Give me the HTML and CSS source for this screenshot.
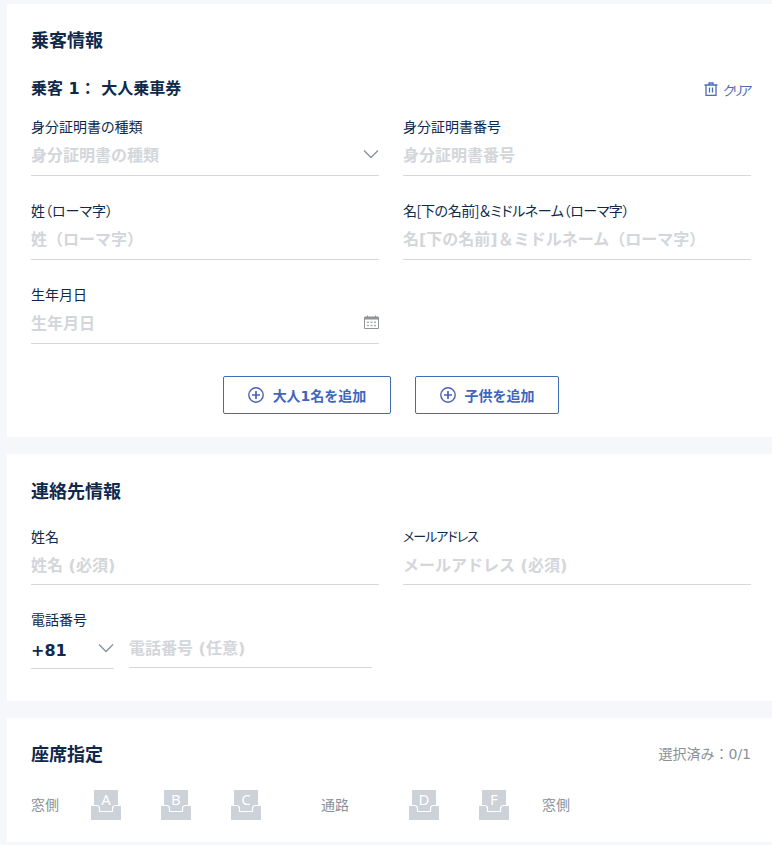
FILE: index.html
```html
<!DOCTYPE html>
<html lang="ja">
<head>
<meta charset="utf-8">
<title>乗客情報</title>
<link rel="stylesheet" href="styles.css">
</head>
<body>
<svg class="defs" width="0" height="0" aria-hidden="true">
  <symbol id="chev" viewBox="0 0 16 10"><path d="M1 1.5 8 8.5 15 1.5" fill="none" stroke="currentColor" stroke-width="1.3"/></symbol>
  <symbol id="plus" viewBox="0 0 16 16"><circle cx="8" cy="8" r="7.200" fill="none" stroke="currentColor" stroke-width="1.400"/><path d="M8 4v8M4 8h8" stroke="currentColor" stroke-width="1.700"/></symbol>
  <symbol id="seat" viewBox="0 0 30 30"><path d="M3 0H27V15H28Q30 15 30 17V30H0V17Q0 15 2 15H3Z" fill="#cdd1d8"/><path d="M1 15.500H5.500Q8.500 15.500 8.500 18.500V21.500H21.500V18.500Q21.500 15.500 24.500 15.500H29" fill="none" stroke="#fff" stroke-width="1.2"/></symbol>
</svg>
<main class="page">
  <section class="card card-pass">
    <h2 class="title">乗客情報</h2>
    <div class="pass-head">
      <h3 class="pass-title">乗客 1： 大人乗車券</h3>
      <a class="clear">
        <svg class="trash" viewBox="0 0 14 14"><path d="M.5 3h13M5 3V1h4v2M2 3v10.300h10V3M5.500 5.500v5M8.500 5.500v5" fill="none" stroke="currentColor" stroke-width="1.300"/></svg>
        <span class="clear-text">クリア</span>
      </a>
    </div>
    <div class="grid">
      <div class="field"><label>身分証明書の種類</label><div class="control"><span class="ph">身分証明書の種類</span><svg class="chev"><use href="#chev"/></svg></div></div>
      <div class="field"><label>身分証明書番号</label><div class="control"><span class="ph">身分証明書番号</span></div></div>
      <div class="field"><label>姓（ローマ字）</label><div class="control"><span class="ph">姓（ローマ字）</span></div></div>
      <div class="field"><label class="label-tight">名[下の名前]＆ミドルネーム（ローマ字）</label><div class="control"><span class="ph">名[下の名前]＆ミドルネーム（ローマ字）</span></div></div>
      <div class="field"><label>生年月日</label><div class="control"><span class="ph">生年月日</span>
        <svg class="cal" viewBox="0 0 15 14"><path d="M.5 2h14v11.500H.5Z" fill="none" stroke="#8f9499"/><path d="M.5 2h14v2.500H.5Z" fill="#8f9499"/><path d="M3.500 .5v2M11.500 .5v2" stroke="#8f9499"/><path d="M3 6.500h2v1.500H3ZM6.500 6.500h2v1.500h-2ZM10 6.500h2v1.500h-2ZM3 9.800h2v1.500H3ZM6.500 9.800h2v1.500h-2ZM10 9.800h2v1.500h-2Z" fill="#a9adb2"/></svg>
      </div></div>
    </div>
    <div class="actions">
      <button class="btn btn-adult"><svg class="plus"><use href="#plus"/></svg>大人1名を追加</button>
      <button class="btn btn-child"><svg class="plus"><use href="#plus"/></svg>子供を追加</button>
    </div>
  </section>

  <section class="card card-contact">
    <h2 class="title">連絡先情報</h2>
    <div class="grid">
      <div class="field"><label>姓名</label><div class="control"><span class="ph">姓名 (必須)</span></div></div>
      <div class="field"><label class="label-kana">メールアドレス</label><div class="control"><span class="ph">メールアドレス (必須)</span></div></div>
      <div class="field field-phone"><label>電話番号</label>
        <div class="phone">
          <div class="control country"><span class="code">+81</span><svg class="chev"><use href="#chev"/></svg></div>
          <div class="control tel"><span class="ph">電話番号 (任意)</span></div>
        </div>
      </div>
    </div>
  </section>

  <section class="card card-seat">
    <div class="seat-head">
      <h2 class="title">座席指定</h2>
      <span class="count">選択済み：0/1</span>
    </div>
    <div class="seats">
      <span class="side">窓側</span>
      <div class="seat"><svg><use href="#seat"/></svg><b>A</b></div>
      <div class="seat"><svg><use href="#seat"/></svg><b>B</b></div>
      <div class="seat"><svg><use href="#seat"/></svg><b>C</b></div>
      <span class="aisle">通路</span>
      <div class="seat"><svg><use href="#seat"/></svg><b>D</b></div>
      <div class="seat"><svg><use href="#seat"/></svg><b>F</b></div>
      <span class="side side-end">窓側</span>
    </div>
  </section>
</main>
</body>
</html>
```
FILE: styles.css
```css
* { box-sizing: border-box; }
html, body { margin: 0; height: 100%; }
body {
  background: #f5f7fa;
  color: #0f294d;
  font-family: "DejaVu Sans", "Noto Sans CJK JP", sans-serif;
  overflow: hidden;
}
.defs { position: absolute; }
.page {
  padding: 4px 0 0 7px;
  display: flex;
  flex-direction: column;
  gap: 17px;
}
.card { background: #fff; padding: 0 21px 0 24px; }
.card-pass { height: 433px; padding-top: 24px; }
.card-contact { height: 247px; padding-top: 25px; }
.card-seat { height: 124px; padding-top: 24px; }
.title { margin: 0; font-size: 18px; line-height: 26px; font-weight: 700; }
.pass-head {
  display: flex;
  justify-content: space-between;
  align-items: center;
  margin-top: 23px;
  height: 24px;
}
.pass-title { margin: 0; font-size: 16px; line-height: 24px; font-weight: 700; }
.clear {
  display: flex;
  align-items: center;
  gap: 6px;
  color: #4c6bb5;
  font-family: "Noto Sans CJK JP", sans-serif;
  font-size: 13px;
  font-feature-settings: "palt";
}
.clear-text { width: 28px; margin-left: -1px; letter-spacing: -2.500px; white-space: nowrap; }
.trash { width: 14px; height: 14px; }
.grid {
  display: grid;
  grid-template-columns: 348px 348px;
  column-gap: 24px;
  row-gap: 0;
}
.pass-head + .grid { margin-top: 15px; }
.card-contact .grid { margin-top: 21px; }
.field { height: 84px; }
.field label {
  display: block;
  font-family: "Noto Sans CJK JP", sans-serif;
  font-size: 14px;
  line-height: 20px;
  font-feature-settings: "palt";
}
.field .label-tight { letter-spacing: -.4px; }
.field .label-kana { font-size: 13px; letter-spacing: -1px; }
.field-phone label { margin: -1px 0 1px; }
.control {
  display: flex;
  align-items: center;
  justify-content: space-between;
  height: 40px;
  padding-bottom: 4px;
  border-bottom: 1px solid #d5d8dc;
}
.card-contact .control { height: 39px; padding-bottom: 3px; }
.ph { color: #d3d6da; font-size: 16px; font-weight: 700; white-space: nowrap; }
.chev { width: 16px; height: 10px; color: #8a9199; }
.cal { width: 15px; height: 14px; }
.actions { display: flex; justify-content: center; gap: 24px; margin-top: 8px; }
.btn {
  display: flex;
  align-items: center;
  justify-content: center;
  gap: 9px;
  height: 38px;
  padding: 0;
  background: #fff;
  border: 1px solid #3f6db3;
  border-radius: 2px;
  color: #3f66bd;
  font-family: "DejaVu Sans", "Noto Sans CJK JP", sans-serif;
  font-size: 14px;
  font-weight: 700;
}
.btn-adult { width: 168px; }
.btn-child { width: 144px; }
.plus { width: 16px; height: 16px; color: #4a62b8; }
.phone { display: flex; gap: 15px; }
.card-contact .country { width: 83px; }
.code { margin-top: 5px; font-size: 16px; font-weight: 700; }
.card-contact .tel { width: 243px; height: 38px; }
.seat-head { display: flex; justify-content: space-between; align-items: center; }
.count { margin-bottom: 4px; color: #8a9199; font-size: 14px; }
.seats { display: flex; align-items: center; margin-top: 22px; height: 30px; color: #8a9199; font-size: 14px; }
.side { width: 28px; margin: 0 32px 2px 0; white-space: nowrap; }
.seat { position: relative; width: 30px; height: 30px; margin-right: 40px; }
.seat svg { display: block; width: 30px; height: 30px; }
.seat b {
  position: absolute;
  top: 0;
  left: 0;
  width: 30px;
  color: #fff;
  font: 400 15px/18px "Noto Sans", sans-serif;
  text-align: center;
}
.aisle { width: 28px; margin: 0 60px 2px 20px; white-space: nowrap; }
.side-end { margin: 0 0 2px -7px; }
```
